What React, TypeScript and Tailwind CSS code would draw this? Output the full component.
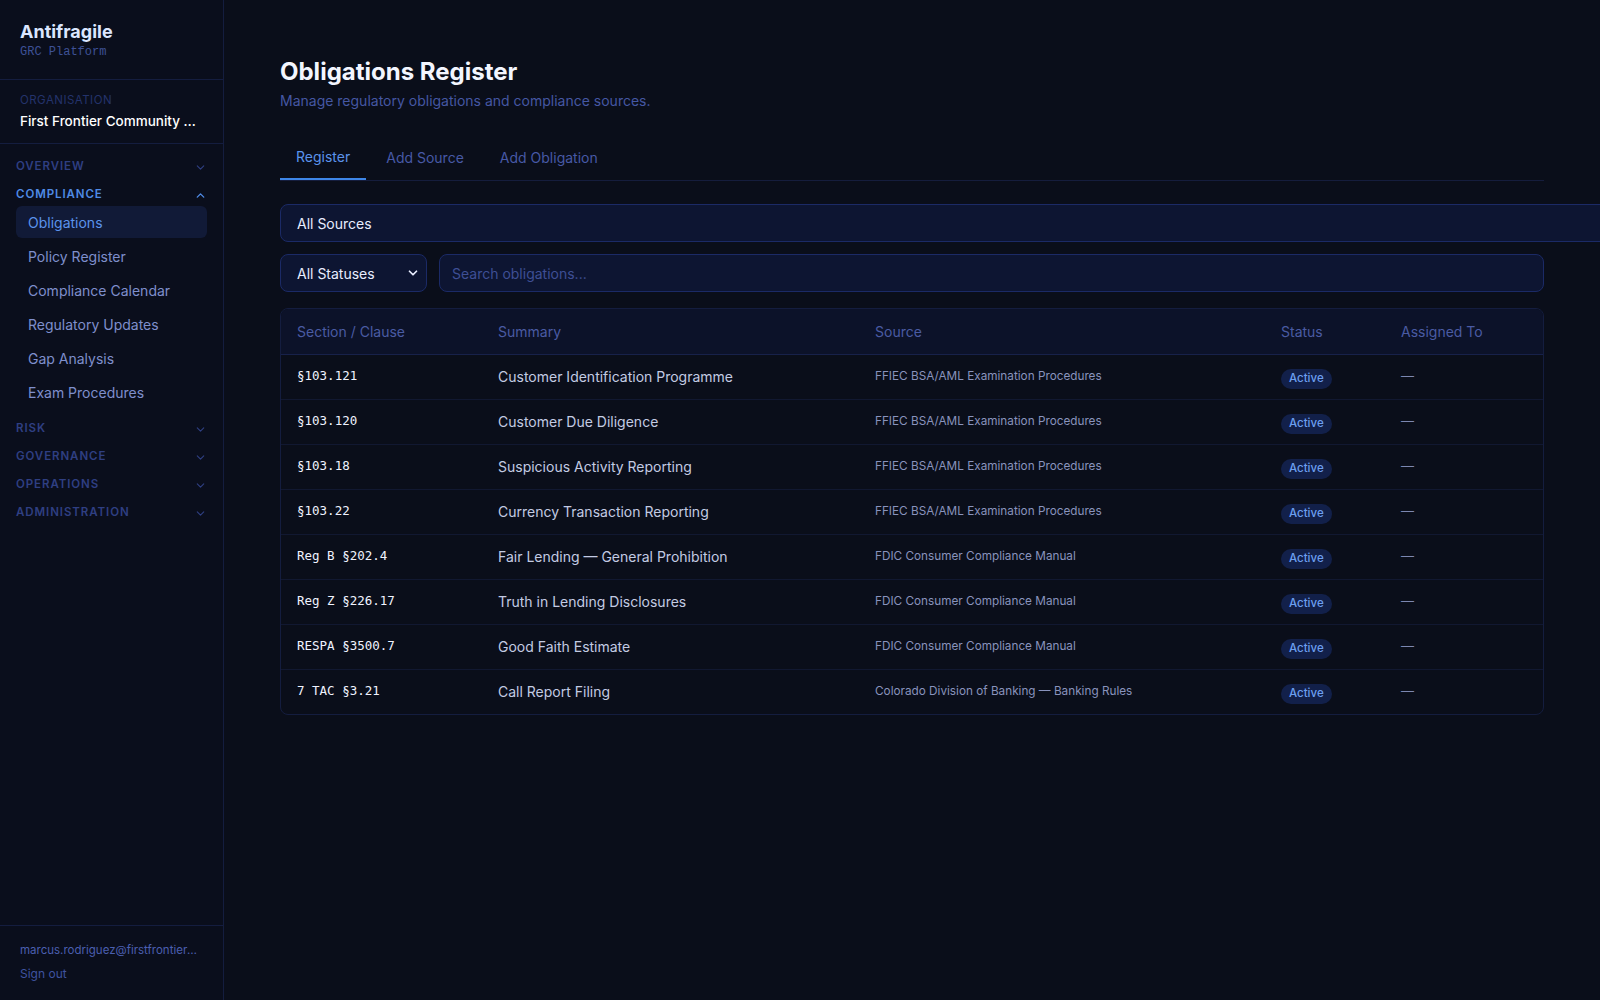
import { ChevronDown, ChevronUp } from 'lucide-react'

const sans = { fontFamily: 'Inter, "Noto Sans", sans-serif' }

const complianceItems = [
  'Obligations',
  'Policy Register',
  'Compliance Calendar',
  'Regulatory Updates',
  'Gap Analysis',
  'Exam Procedures',
]

const rows = [
  { section: '§103.121', summary: 'Customer Identification Programme', source: 'FFIEC BSA/AML Examination Procedures' },
  { section: '§103.120', summary: 'Customer Due Diligence', source: 'FFIEC BSA/AML Examination Procedures' },
  { section: '§103.18', summary: 'Suspicious Activity Reporting', source: 'FFIEC BSA/AML Examination Procedures' },
  { section: '§103.22', summary: 'Currency Transaction Reporting', source: 'FFIEC BSA/AML Examination Procedures' },
  { section: 'Reg B §202.4', summary: 'Fair Lending — General Prohibition', source: 'FDIC Consumer Compliance Manual' },
  { section: 'Reg Z §226.17', summary: 'Truth in Lending Disclosures', source: 'FDIC Consumer Compliance Manual' },
  { section: 'RESPA §3500.7', summary: 'Good Faith Estimate', source: 'FDIC Consumer Compliance Manual' },
  { section: '7 TAC §3.21', summary: 'Call Report Filing', source: 'Colorado Division of Banking — Banking Rules' },
]

function GroupHeader({ label, open, active }: { label: string; open?: boolean; active?: boolean }) {
  return (
    <div
      className={`flex items-center justify-between h-7 px-4 text-[11.5px] font-semibold tracking-[0.08em] ${
        active ? 'text-[#4f8be6]' : 'text-[#2f3f82]'
      }`}
    >
      <span>{label}</span>
      {open ? <ChevronUp size={13} strokeWidth={2.5} /> : <ChevronDown size={13} strokeWidth={2} />}
    </div>
  )
}

function Sidebar() {
  return (
    <aside className="w-56 shrink-0 h-full flex flex-col border-r border-[#141d3f] bg-[#0a0e1c]">
      <div className="px-5 pt-5 pb-[19px] border-b border-[#141d3f]">
        <div className="text-[18px] font-bold leading-6 text-[#dbe6ff]">Antifragile</div>
        <div className="text-[12px] leading-4 text-[#3e5196]" style={{ fontFamily: '"Liberation Mono", monospace' }}>
          GRC Platform
        </div>
      </div>

      <div className="px-5 pt-3 pb-3 border-b border-[#141d3f]">
        <div className="text-[11.5px] leading-4 tracking-[0.04em] text-[#24336b]">ORGANISATION</div>
        <div className="mt-[3px] text-[13.5px] leading-5 font-medium text-white truncate">First Frontier Community Bank</div>
      </div>

      <nav className="flex-1 pt-[9px]">
        <GroupHeader label="OVERVIEW" />
        <GroupHeader label="COMPLIANCE" open active />
        <div className="-mt-[3px] flex flex-col gap-[2px] px-4 pb-[7px]">
          {complianceItems.map((item, i) => (
            <div
              key={item}
              className={`h-8 flex items-center px-3 rounded-md text-[14px] ${
                i === 0 ? 'bg-[#111a37] text-[#5b93ec]' : 'text-[#7f8fcc]'
              }`}
            >
              {item}
            </div>
          ))}
        </div>
        <GroupHeader label="RISK" />
        <GroupHeader label="GOVERNANCE" />
        <GroupHeader label="OPERATIONS" />
        <GroupHeader label="ADMINISTRATION" />
      </nav>

      <div className="border-t border-[#141d3f] px-5 pt-4 pb-[18px]">
        <div className="text-[11.5px] leading-4 text-[#4a5fb0] truncate">marcus.rodriguez@firstfrontiercu.org</div>
        <div className="mt-2 text-[12px] leading-4 text-[#3f53a0]">Sign out</div>
      </div>
    </aside>
  )
}

export default function App() {
  return (
    <div className="h-screen w-screen overflow-hidden flex bg-[#0a0e1a]" style={sans}>
      <Sidebar />

      <main className="flex-1 min-w-0 h-full px-14 pt-14">
        {/* Header */}
        <h1 className="text-[24px] leading-8 font-bold text-[#f3f6ff]">Obligations Register</h1>
        <p className="mt-[3px] text-[14px] leading-5 text-[#4557a3]">Manage regulatory obligations and compliance sources.</p>

        {/* Tabs */}
        <div className="mt-[23px] flex border-b border-[#151d3d]">
          <div className="px-4 h-[46px] flex items-center text-[14px] text-[#5b93ec] border-b-2 border-[#3e86e8] -mb-px">
            Register
          </div>
          <div className="px-5 h-[46px] flex items-center text-[14px] text-[#4759a6]">Add Source</div>
          <div className="px-4 h-[46px] flex items-center text-[14px] text-[#4759a6]">Add Obligation</div>
        </div>

        {/* Filters */}
        <div className="mt-[23px] w-[1360px] h-[38px] flex items-center px-4 rounded-l-lg border border-[#1b2a66] bg-[#0d1532] text-[14px] text-[#e8edff]">
          All Sources
        </div>
        <div className="mt-3 flex gap-3">
          <div className="w-[147px] h-[38px] flex items-center justify-between pl-4 pr-[6px] rounded-lg border border-[#1b2a66] bg-[#0d1532] text-[14px] text-[#e8edff]">
            <span>All Statuses</span>
            <ChevronDown size={14} strokeWidth={3} className="text-[#e8edff]" />
          </div>
          <div className="flex-1 h-[38px] flex items-center px-3 rounded-lg border border-[#1b2a66] bg-[#0d1532] text-[14px] text-[#3e4f95]">
            Search obligations...
          </div>
        </div>

        {/* Table */}
        <div className="mt-4 rounded-lg border border-[#141d3f] overflow-hidden">
          <table className="w-full table-fixed border-collapse">
            <colgroup>
              <col className="w-[201px]" />
              <col className="w-[377px]" />
              <col className="w-[406px]" />
              <col className="w-[120px]" />
              <col />
            </colgroup>
            <thead>
              <tr className="bg-[#0c1229] border-b border-[#17214a] h-[45px]">
                {['Section / Clause', 'Summary', 'Source', 'Status', 'Assigned To'].map((h) => (
                  <th key={h} className="px-4 text-left font-normal text-[14px] text-[#4a5ba3]">
                    {h}
                  </th>
                ))}
              </tr>
            </thead>
            <tbody>
              {rows.map((r, i) => (
                <tr key={r.section} className={`h-[45px] ${i < rows.length - 1 ? 'border-b border-[#111831]' : ''}`}>
                  <td
                    className="px-4 text-[12.5px] text-[#f0f3ff]"
                    style={{ fontFamily: '"DejaVu Sans Mono", "Liberation Mono", monospace' }}
                  >
                    {r.section}
                  </td>
                  <td className="px-4 text-[14px] text-[#c3cbe3]">{r.summary}</td>
                  <td className="px-4 text-[11.75px] text-[#8993bd]">{r.source}</td>
                  <td className="px-4">
                    <span className="inline-flex items-center h-5 px-2 rounded-full bg-[#12204a] text-[11.5px] font-medium text-[#6c9ff0]">
                      Active
                    </span>
                  </td>
                  <td className="px-4 text-[13px] text-[#7d87b0]">—</td>
                </tr>
              ))}
            </tbody>
          </table>
        </div>
      </main>
    </div>
  )
}
